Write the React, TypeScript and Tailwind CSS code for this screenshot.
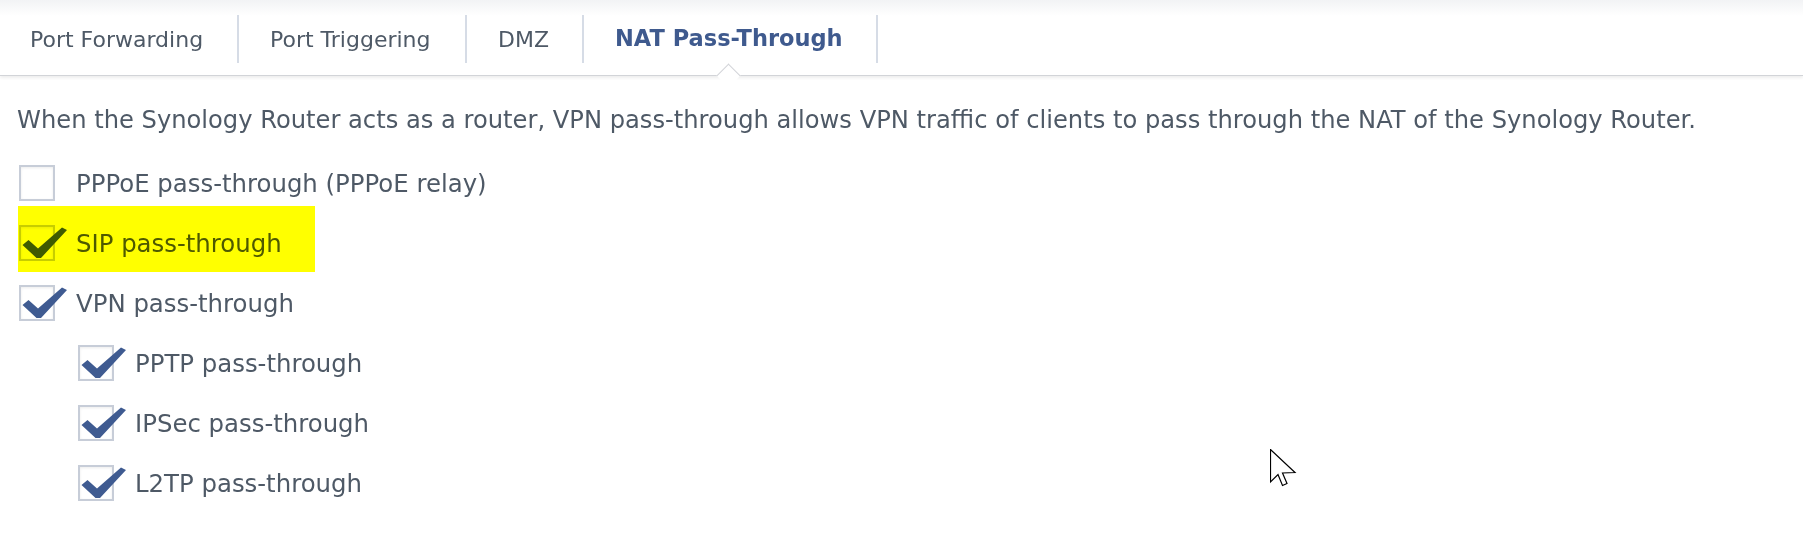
import React from 'react';

// Tabs across the top of the NAT settings page
const tabs = [
  { label: 'Port Forwarding', width: 'w-[239px]', pad: 'pl-[30px]' },
  { label: 'Port Triggering', width: 'w-[228px]', pad: 'pl-[31px]' },
  { label: 'DMZ', width: 'w-[117px]', pad: 'pl-[31px]' },
  { label: 'NAT Pass-Through', width: 'w-[294px]', pad: 'pl-[31px]', active: true },
];

const options = [
  { label: 'PPPoE pass-through (PPPoE relay)', checked: false },
  { label: 'SIP pass-through', checked: true, highlight: true },
  { label: 'VPN pass-through', checked: true },
  { label: 'PPTP pass-through', checked: true, nested: true },
  { label: 'IPSec pass-through', checked: true, nested: true },
  { label: 'L2TP pass-through', checked: true, nested: true },
];

function CheckBox({ checked }: { checked: boolean }) {
  return (
    <div className="relative w-[36px] h-[36px] shrink-0 bg-white border-2 border-[#c7cdd8] shadow-[inset_0_1px_3px_rgba(0,0,0,0.08)]">
      {checked && (
        <svg
          className="absolute -left-[2px] -top-[2px] overflow-visible"
          width="36"
          height="36"
          viewBox="0 0 36 36"
        >
          <polygon
            points="3.5,20 9.5,15 19,23.5 43,2.5 48,5 22,33 17.5,33"
            fill="#3f5b91"
          />
        </svg>
      )}
    </div>
  );
}

export default function App() {
  return (
    <div
      className="relative w-[1803px] h-[558px] bg-white overflow-hidden text-[#4e5966]"
      style={{ fontFamily: '"DejaVu Sans", Verdana, sans-serif' }}
    >
      {/* Tab bar */}
      <div className="relative h-[76px] border-b border-[#d2d4d8] shadow-[0_2px_3px_rgba(0,0,0,0.07)] bg-[linear-gradient(to_bottom,#f2f3f5_0px,#ffffff_16px)]">
        <div className="flex pt-[15px]">
          {tabs.map((tab) => (
            <div
              key={tab.label}
              className={`relative ${tab.width} ${tab.pad} h-[48px] flex items-center border-r-2 border-[#d6dce6] ${
                tab.active ? 'text-[22.5px] font-bold text-[#3f5a8e]' : 'text-[22px]'
              }`}
            >
              {tab.label}
              {tab.active && (
                <div className="absolute left-[136px] -bottom-[21px] w-[17px] h-[17px] rotate-45 bg-white border-t border-l border-[#d2d4d8]" />
              )}
            </div>
          ))}
        </div>
      </div>

      {/* Content */}
      <div className="pl-[19px]">
        <p className="-ml-[2px] mt-[30px] leading-[28px] text-[24.2px] whitespace-nowrap">
          When the Synology Router acts as a router, VPN pass-through allows VPN traffic of clients to pass through the NAT of the Synology Router.
        </p>
        <div className="mt-[19px]">
          {options.map((opt) => (
            <div
              key={opt.label}
              className={`relative h-[60px] flex items-center ${opt.nested ? 'pl-[59px]' : ''}`}
            >
              <CheckBox checked={opt.checked} />
              <span className="ml-[21px] pt-[3px] text-[24.4px]">{opt.label}</span>
              {opt.highlight && (
                <div className="absolute -left-px -top-[7px] w-[297px] h-[66px] bg-[#ffff00] mix-blend-multiply" />
              )}
            </div>
          ))}
        </div>
      </div>

      {/* Mouse pointer */}
      <svg className="absolute left-[1270px] top-[449px]" width="28" height="40" viewBox="0 0 28 40">
        <polygon
          points="0.5,0.5 0.5,33 8,25.5 12.5,36.5 17,34.5 12.5,24 25,23.5"
          fill="white"
          stroke="black"
          strokeWidth="1.2"
          strokeLinejoin="miter"
        />
      </svg>
    </div>
  );
}
